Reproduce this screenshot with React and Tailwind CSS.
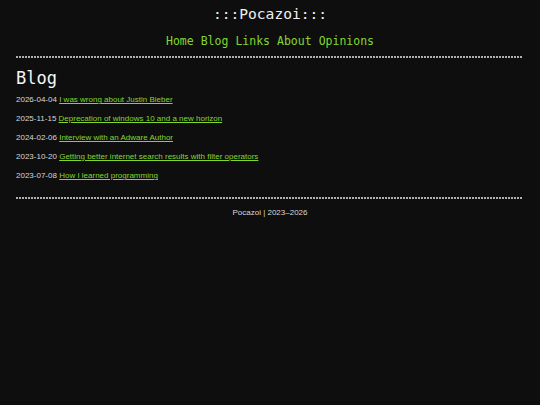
export default function App() {
  const posts = [
    ["2026-04-04", "I was wrong about Justin Bieber"],
    ["2025-11-15", "Deprecation of windows 10 and a new horizon"],
    ["2024-02-06", "Interview with an Adware Author"],
    ["2023-10-20", "Getting better internet search results with filter operators"],
    ["2023-07-08", "How I learned programming"],
  ];
  const mono = { fontFamily: '"DejaVu Sans Mono", monospace' };
  return (
    <div className="min-h-[405px] w-[540px] bg-[#0e0e0e] text-[#e6e6e6]" style={{ fontFamily: '"Liberation Sans", Arial, sans-serif' }}>
      <div className="px-[16px]">
        <header className="flex flex-col items-center pt-[5px]">
          <div className="text-[14.6px] leading-[18px] text-[#f0f0f0]" style={mono}>:::Pocazoi:::</div>
          <nav className="mt-[11px] flex gap-[7px] text-[11.5px] leading-[14px] text-[#84d62e]" style={mono}>
            <a>Home</a>
            <a>Blog</a>
            <a>Links</a>
            <a>About</a>
            <a>Opinions</a>
          </nav>
        </header>
        <div className="mt-[8px] h-[2px] w-[507px] bg-[repeating-linear-gradient(90deg,#b0b0b0_0px,#b0b0b0_2px,transparent_2px,transparent_3px)]" />
        <h1 className="mt-[9px] text-[17px] leading-[22px] text-[#f5f5f5]" style={mono}>Blog</h1>
        <ul className="mt-[5px] flex flex-col gap-[8px]">
          {posts.map(([d, t]) => (
            <li key={d} className="text-[8px] leading-[11px] text-[#d8d8d8]">
              {d} <a className="text-[#84d62e] underline">{t}</a>
            </li>
          ))}
        </ul>
        <div className="mt-[16px] h-[2px] w-[507px] bg-[repeating-linear-gradient(90deg,#b0b0b0_0px,#b0b0b0_2px,transparent_2px,transparent_3px)]" />
        <footer className="mt-[8px] text-center text-[8px] leading-[11px] text-[#d8d8d8]">Pocazoi | 2023–2026</footer>
      </div>
    </div>
  );
}
